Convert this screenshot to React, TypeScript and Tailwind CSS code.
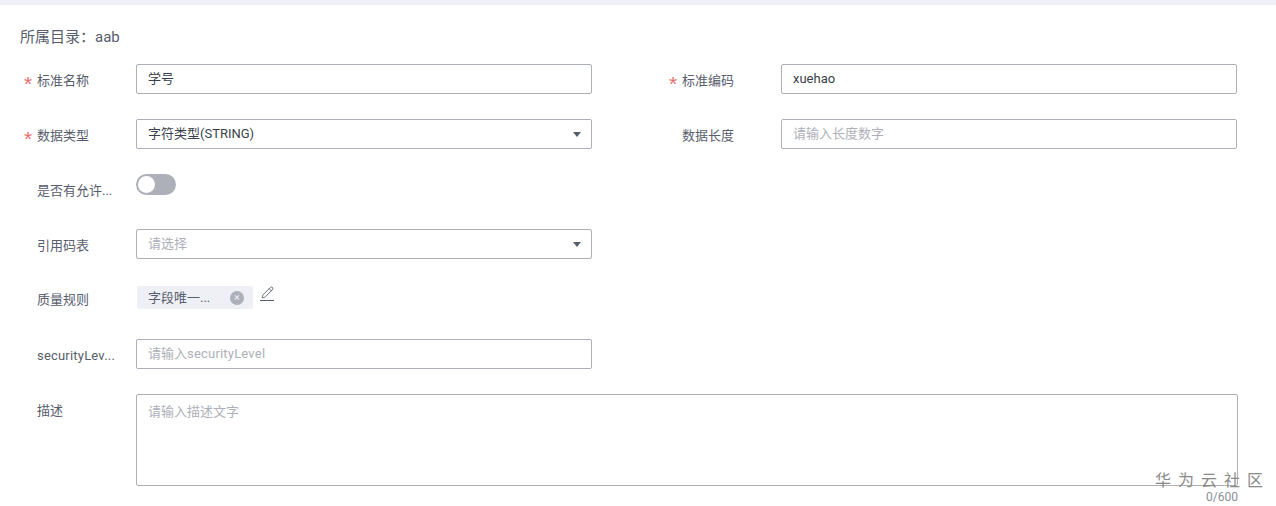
import { Pencil } from "lucide-react";
import type { ReactNode } from "react";

const fieldFont = "font-['Roboto','Noto_Sans_CJK_SC',sans-serif]";

// One label + control pair
const Field = ({ label, required, labelPad = "pt-[8px]", children }: { label: ReactNode; required?: boolean; labelPad?: string; children: ReactNode }) => (
  <div className="flex w-[572px]">
    <div className={`relative w-[116px] shrink-0 pl-[17px] text-[13px] leading-[18px] text-[#575d6c] ${labelPad}`}>
      {required && <span className="absolute left-[4px] top-[10px] font-['Liberation_Sans'] text-[21px] leading-[20px] text-[#e5706f]">*</span>}
      {label}
    </div>
    {children}
  </div>
);

const TextBox = ({ value, placeholder }: { value?: string; placeholder?: ReactNode }) => (
  <div className={`h-[30px] w-[456px] rounded-[2px] border border-[#adb0b8] bg-white px-[11px] text-[13px] leading-[28px] ${value ? "text-[#3a3f4c]" : "text-[#adb0b8]"}`}>
    {value ?? placeholder}
  </div>
);

const SelectBox = ({ value, placeholder }: { value?: string; placeholder?: string }) => (
  <div className={`flex h-[30px] w-[456px] items-center justify-between rounded-[2px] border border-[#adb0b8] bg-white pl-[11px] pr-[10px] text-[13px] ${value ? "text-[#3a3f4c]" : "text-[#adb0b8]"}`}>
    <span>{value ?? placeholder}</span>
    <span className="h-0 w-0 border-x-[4.5px] border-t-[5px] border-x-transparent border-t-[#575d6c]" />
  </div>
);

export default function App() {
  return (
    <div className={`relative h-[506px] w-[1276px] overflow-hidden bg-white ${fieldFont}`}>
      <div className="h-[5px] bg-[#eef1f8]" />

      <div className="px-[20px]">
        <div className="pt-[22px] text-[15px] leading-[20px] text-[#575d6c]">所属目录：aab</div>

        <div className="mt-[17px] flex gap-[73px]">
          <Field label="标准名称" required>
            <TextBox value="学号" />
          </Field>
          <Field label="标准编码" required>
            <TextBox value="xuehao" />
          </Field>
        </div>

        <div className="mt-[25px] flex gap-[73px]">
          <Field label="数据类型" required>
            <SelectBox value="字符类型(STRING)" />
          </Field>
          <Field label="数据长度">
            <TextBox placeholder="请输入长度数字" />
          </Field>
        </div>

        <div className="mt-[25px]">
          <Field label="是否有允许...">
            <div className="flex h-[21px] w-[40px] items-center rounded-full bg-[#adb0b8] pl-[2px]">
              <span className="h-[17px] w-[17px] rounded-full bg-white" />
            </div>
          </Field>
        </div>

        <div className="mt-[29px]">
          <Field label="引用码表">
            <SelectBox placeholder="请选择" />
          </Field>
        </div>

        <div className="mt-[27px]">
          <Field label="质量规则" labelPad="pt-[5px]">
            <div className="flex items-start">
              <div className="ml-[1px] flex h-[23px] w-[116px] items-center justify-between rounded-[2px] bg-[#eef0f5] pl-[11px] pr-[9px] text-[13px] text-[#575d6c]">
                <span>字段唯一...</span>
                <span className="flex h-[14px] w-[14px] items-center justify-center rounded-full bg-[#adb0b8] text-[11px] leading-none text-[#eef0f5]">×</span>
              </div>
              <span className="ml-[7px] flex flex-col items-center text-[#575d6c]">
                <Pencil size={13} strokeWidth={1.6} />
                <span className="mt-[1px] h-[1px] w-[14px] bg-[#575d6c]" />
              </span>
            </div>
          </Field>
        </div>

        <div className="mt-[30px]">
          <Field label={<span className="tracking-[0.2px]">securityLev...</span>}>
            <TextBox placeholder={<>请输入<span className="tracking-[0.2px]">securityLevel</span></>} />
          </Field>
        </div>

        <div className="mt-[25px] flex">
          <div className="w-[116px] shrink-0 pl-[17px] pt-[8px] text-[13px] leading-[18px] text-[#575d6c]">描述</div>
          <div className="h-[92px] w-[1102px] rounded-[2px] border border-[#adb0b8] bg-white px-[11px] pt-[8px] text-[13px] leading-[18px] text-[#adb0b8]">
            请输入描述文字
          </div>
        </div>

        <div className="mr-[18px] mt-[3px] text-right text-[12px] leading-[16px] text-[#8a8e99]">0/600</div>
      </div>

      <div className="absolute left-[1155px] top-[471px] whitespace-nowrap text-[16px] leading-[20px] tracking-[7px] text-[#8a8a8a]">华为云社区</div>
    </div>
  );
}
